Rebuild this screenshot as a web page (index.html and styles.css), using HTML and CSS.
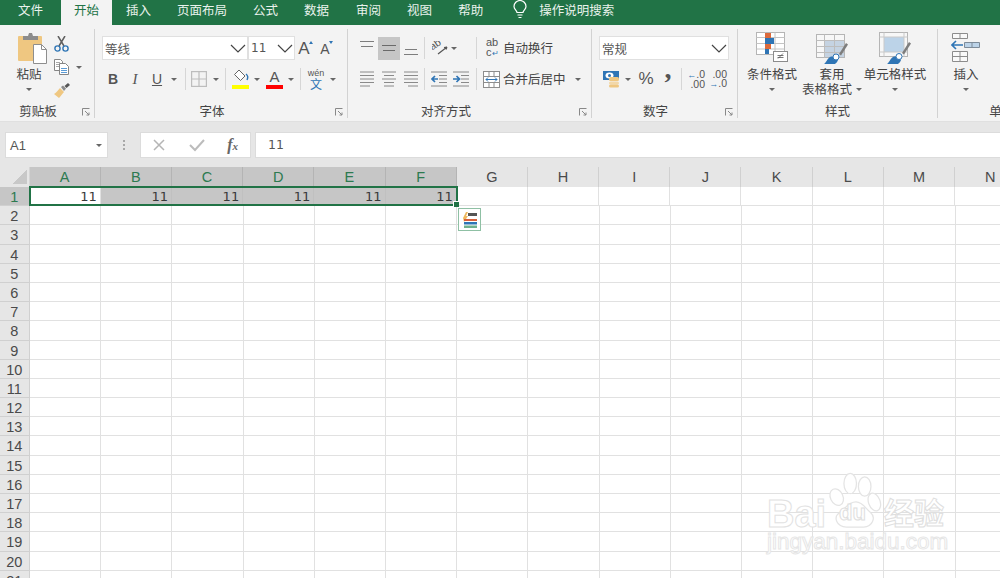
FILE: index.html
```html
<!DOCTYPE html>
<html lang="zh-CN">
<head>
<meta charset="utf-8">
<title>Excel</title>
<link rel="stylesheet" href="styles.css">
</head>
<body>
<div class="app">
  <nav class="tabs">
    <span class="tab">文件</span>
    <span class="tab active">开始</span>
    <span class="tab">插入</span>
    <span class="tab">页面布局</span>
    <span class="tab">公式</span>
    <span class="tab">数据</span>
    <span class="tab late">审阅</span>
    <span class="tab">视图</span>
    <span class="tab">帮助</span>
    <span class="search">
      <svg width="16" height="19" viewBox="0 0 16 19" fill="none" stroke="#fff" stroke-width="1.2"><path d="M5 12.5C5 10.500 2 9.500 2 6.500a6 6 0 0 1 12 0C14 9.500 11 10.500 11 12.500Z"/><path d="M5.500 15h5M6.500 17.500h3"/></svg>
      <span>操作说明搜索</span>
    </span>
  </nav>

  <section class="ribbon">
    <div class="group g-clip">
      <div class="gbody clip-body">
        <div class="big w42">
          <svg class="paste-i" width="30" height="33" viewBox="0 0 30 33"><rect x="1" y="4" width="24" height="25" rx="1" fill="#efc781"/><path d="M6 4h5l1-3h3l1 3h5v4H6Z" fill="#8c8c8c"/><path d="M16.500 12.500h8l5 5v14h-13Z" fill="#fff" stroke="#8e8e8e"/><path d="M24.500 12.500v5h5" fill="none" stroke="#8e8e8e"/></svg>
          <span class="big-t">粘贴</span>
          <span class="big-c"><i class="caret"></i></span>
        </div>
        <div class="clip-tools">
          <div class="tool-row">
            <svg width="15" height="16" viewBox="0 0 15 16" fill="none"><path d="M4 0l6 10M11 0L5 10" stroke="#5f5f5f" stroke-width="1.500"/><circle cx="3.500" cy="12.500" r="2.600" stroke="#2f75b5" stroke-width="1.400"/><circle cx="11.500" cy="12.500" r="2.600" stroke="#2f75b5" stroke-width="1.400"/></svg>
          </div>
          <div class="tool-row">
            <svg width="15" height="16" viewBox="0 0 15 16" fill="#fff" stroke="#858585"><path d="M.5.500h6l2 2v9h-8Z"/><path d="M2 3.500h4M2 5.500h4M2 7.500h4" stroke="#a8a8a8"/><path d="M5.500 4.500h6l3 3v8h-9Z"/><path d="M7 9.500h6M7 11.500h6M7 13.500h6" stroke="#5b9bd5"/></svg>
            <i class="caret cl"></i>
          </div>
          <div class="tool-row">
            <svg width="16" height="15" viewBox="0 0 16 15"><path d="M0 11c2-1 4-4 6-6l4 4c-2 2-4 5-5 6Z" fill="#efc781"/><path d="M7 4l2-1.500 3 3L10 8Z" fill="#8a8a8a"/><path d="M10.500 3L14 0l2 2-3.500 3Z" fill="#555"/></svg>
          </div>
        </div>
      </div>
      <div class="gfoot"><span class="glabel pr-clip">剪贴板</span><svg class="launch" width="8" height="8" viewBox="0 0 8 8" fill="none" stroke="#888"><path d="M.5 7.500v-7h7M3 3l4 4M7 4.500V7H4.500"/></svg></div>
    </div>

    <div class="group g-font">
      <div class="gbody pad8">
        <div class="line">
          <div class="select w145"><span>等线</span><svg width="16" height="9" viewBox="0 0 16 9" fill="none" stroke="#444" stroke-width="1.200"><path d="M1 1l7 7 7-7"/></svg></div>
          <div class="select w47"><span class="num">11</span><svg width="16" height="9" viewBox="0 0 16 9" fill="none" stroke="#444" stroke-width="1.200"><path d="M1 1l7 7 7-7"/></svg></div>
          <span class="growa"><span class="ga big-a">A</span><i class="tri-up"></i></span>
          <span class="growa"><span class="ga small-a">A</span><i class="tri-down"></i></span>
        </div>
        <div class="line second">
          <span class="fmt w22 b">B</span>
          <span class="fmt w22 it">I</span>
          <span class="fmt w22 un">U</span>
          <span class="cw12"><i class="caret"></i></span>
          <i class="sep m4"></i>
          <span class="cell-i">
            <svg width="16" height="16" viewBox="0 0 16 16" fill="none" stroke="#bdbdbd" stroke-width="1.200"><rect x=".6" y=".6" width="14.800" height="14.800"/><path d="M8 .6v14.800M.6 8h14.800"/></svg>
          </span>
          <span class="cw18"><i class="caret"></i></span>
          <i class="sep"></i>
          <span class="colorb ml7">
            <svg width="18" height="13" viewBox="0 0 18 13" fill="none"><path d="M7 1l6 6-4.500 4.500-6-6Z" fill="#fff" stroke="#666"/><path d="M14 5c2 1.500 2 4 1 6" stroke="#2f75b5" stroke-width="1.400"/></svg>
            <i class="bar yellow"></i>
          </span>
          <span class="cw12 ml2"><i class="caret"></i></span>
          <span class="colorb ml3">
            <span class="fa">A</span>
            <i class="bar red"></i>
          </span>
          <span class="cw12 ml2"><i class="caret"></i></span>
          <i class="sep m3"></i>
          <span class="wen"><span class="wen-top">wén</span><span class="wen-b">文</span></span>
          <span class="cw14"><i class="caret"></i></span>
        </div>
      </div>
      <div class="gfoot"><span class="glabel pr-font">字体</span><svg class="launch" width="8" height="8" viewBox="0 0 8 8" fill="none" stroke="#888"><path d="M.5 7.500v-7h7M3 3l4 4M7 4.500V7H4.500"/></svg></div>
    </div>

    <div class="group g-align">
      <div class="gbody align-body">
        <div class="line">
          <span class="al"><svg width="14" height="23" viewBox="0 0 14 23" stroke="#7d7d7d" stroke-width="1.200"><path d="M0 4.500h14M1 9.500h12"/></svg></span>
          <span class="al on"><svg width="14" height="23" viewBox="0 0 14 23" stroke="#6a6a6a" stroke-width="1.200"><path d="M0 8.500h14M1 13.500h12"/></svg></span>
          <span class="al"><svg width="14" height="23" viewBox="0 0 14 23" stroke="#7d7d7d" stroke-width="1.200"><path d="M1 12.500h12M0 17.500h14"/></svg></span>
          <i class="sep m-al"></i>
          <span class="orient"><svg width="16" height="14" viewBox="0 0 16 14"><text class="orient-t" x="0" y="9" transform="rotate(-35 1 9)">ab</text><path d="M6 13l9-7M15 6l-3 .5M15 6l-1 2.500" fill="none" stroke="#555" stroke-width="1.200"/></svg></span>
          <i class="caret cl2"></i>
          <i class="sep m-wrap"></i>
          <span class="wrap-i"><span class="wrap-ab">ab</span><span class="wrap-c">c<em>↵</em></span></span>
          <span class="atext">自动换行</span>
        </div>
        <div class="line second">
          <span class="al"><svg width="14" height="16" viewBox="0 0 14 16" stroke="#8a8a8a"><path d="M0 1h14M0 4.500h14M0 8h14M0 11.500h14M0 15h10"/></svg></span>
          <span class="al"><svg width="14" height="16" viewBox="0 0 14 16" stroke="#8a8a8a"><path d="M0 1h14M2 4.500h10M0 8h14M2 11.500h10M2 15h10"/></svg></span>
          <span class="al"><svg width="14" height="16" viewBox="0 0 14 16" stroke="#8a8a8a"><path d="M0 1h14M0 4.500h14M0 8h14M0 11.500h14M4 15h10"/></svg></span>
          <i class="sep m-al"></i>
          <span class="ind"><svg width="16" height="16" viewBox="0 0 16 16" fill="none"><path d="M0 1h16M8 4.500h8M8 8h8M8 11.500h8M0 15h16" stroke="#8a8a8a"/><path d="M1 8h6M4 5L1 8l3 3" stroke="#2f75b5" stroke-width="1.700"/></svg></span>
          <span class="ind"><svg width="16" height="16" viewBox="0 0 16 16" fill="none"><path d="M0 1h16M8 4.500h8M8 8h8M8 11.500h8M0 15h16" stroke="#8a8a8a"/><path d="M0 8h6M3.500 5l3 3-3 3" stroke="#2f75b5" stroke-width="1.700"/></svg></span>
          <i class="sep m-merge"></i>
          <svg class="merge-i" width="17" height="17" viewBox="0 0 17 17" fill="#fff" stroke="#8d8d8d"><rect x=".5" y=".5" width="16" height="16"/><path d="M.5 5.500h16M.5 11.500h16M6 .5v5M11 .5v5M6 11.500v5M11 11.500v5"/><path d="M3 8.500h11M5 6.500l-2 2 2 2M12 6.500l2 2-2 2" fill="none" stroke="#2f75b5"/></svg>
          <span class="atext">合并后居中</span>
          <i class="caret cl3"></i>
        </div>
      </div>
      <div class="gfoot"><span class="glabel pr-align">对齐方式</span><svg class="launch" width="8" height="8" viewBox="0 0 8 8" fill="none" stroke="#888"><path d="M.5 7.500v-7h7M3 3l4 4M7 4.500V7H4.500"/></svg></div>
    </div>

    <div class="group g-num">
      <div class="gbody pad8">
        <div class="line">
          <div class="select w129"><span>常规</span><svg width="16" height="9" viewBox="0 0 16 9" fill="none" stroke="#444" stroke-width="1.200"><path d="M1 1l7 7 7-7"/></svg></div>
        </div>
        <div class="line second">
          <svg class="money" width="18" height="17" viewBox="0 0 18 17"><rect x="0" y="0" width="16" height="9" fill="#2f75b5"/><ellipse cx="6.500" cy="4.500" rx="4" ry="3" fill="#fff"/><circle cx="6.500" cy="4.500" r="1.500" fill="#2f75b5"/><rect x="6" y="6" width="10" height="4" rx="1.500" fill="#efc781"/><rect x="6" y="10.500" width="10" height="3" rx="1.500" fill="#f3d8a8"/><rect x="6" y="13.500" width="10" height="3" rx="1.500" fill="#efc781"/></svg>
          <span class="cw-m"><i class="caret"></i></span>
          <span class="pct">%</span>
          <span class="comma">,</span>
          <i class="sep m-ns"></i>
          <span class="dec"><span><em>←</em>.0</span><span>.00</span></span>
          <span class="dec dec2"><span>.00</span><span><em>→</em>.0</span></span>
        </div>
      </div>
      <div class="gfoot"><span class="glabel pr-num">数字</span><svg class="launch" width="8" height="8" viewBox="0 0 8 8" fill="none" stroke="#888"><path d="M.5 7.500v-7h7M3 3l4 4M7 4.500V7H4.500"/></svg></div>
    </div>

    <div class="group g-style">
      <div class="gbody style-body">
        <div class="big w60">
          <svg width="33" height="33" viewBox="0 0 33 33"><g fill="#fff" stroke="#b5b5b5"><rect x=".5" y=".5" width="28" height="22"/></g><path d="M.5 5.500h28M.5 11.500h28M.5 17h28M9.500.5v22M19 .5v22" stroke="#c4c4c4" fill="none"/><rect x="9" y="1" width="6" height="5" fill="#dc6a3c"/><rect x="9" y="6" width="9" height="6" fill="#2f75b5"/><rect x="9" y="12" width="6" height="5" fill="#dc6a3c"/><rect x="9" y="17" width="4" height="5" fill="#2f75b5"/><rect x="17.500" y="19.500" width="14" height="10" fill="#fff" stroke="#8c8c8c"/><path d="M22 26.500l5-5M21.500 23.500h6M21.500 25.500h6" stroke="#555" stroke-width=".8"/></svg>
          <span class="big-t">条件格式</span>
          <span class="big-c"><i class="caret"></i></span>
        </div>
        <div class="big w60">
          <svg width="32" height="33" viewBox="0 0 32 33"><rect x=".5" y="2.500" width="28" height="23" fill="#f7f7f7" stroke="#b5b5b5"/><rect x="8" y="9" width="20" height="16" fill="#c5d3e2"/><path d="M.5 8.500h28M.5 14.500h28M.5 20.500h28M8.500 2.500v23M18.500 2.500v23" fill="none" stroke="#bdbdbd"/><path d="M23 22L30 11l2 1.500-7 11Z" fill="#7d7d7d"/><path d="M8 32c2-1 3-5 6-7 3-1.500 7 1 8 3-.5 2-2 3-3 4Z" fill="#2f75b5"/><circle cx="20" cy="25" r="3" fill="#fff" stroke="#2f75b5"/></svg>
          <span class="big-t">套用</span>
          <span class="big-t nowrap">表格格式<i class="caret cl4"></i></span>
        </div>
        <div class="big w66">
          <svg width="32" height="33" viewBox="0 0 32 33"><rect x=".5" y=".5" width="28" height="24" fill="#f7f7f7" stroke="#b5b5b5"/><rect x="5" y="5" width="20" height="15" fill="#bcd3e8"/><path d="M.5 5h28M.5 20h28M5 .5v24M25 .5v24" fill="none" stroke="#c9c9c9"/><path d="M23 21L30 10l2 1.500-7 11Z" fill="#7d7d7d"/><path d="M8 32c2-1 3-5 6-7 3-1.500 7 1 8 3-.5 2-2 3-3 4Z" fill="#2f75b5"/><circle cx="20" cy="24.500" r="3" fill="#fff" stroke="#2f75b5"/></svg>
          <span class="big-t">单元格样式</span>
          <span class="big-c"><i class="caret"></i></span>
        </div>
      </div>
      <div class="gfoot"><span class="glabel">样式</span></div>
    </div>

    <div class="group g-cells">
      <div class="gbody cells-body">
        <div class="big w56">
          <svg width="30" height="33" viewBox="0 0 30 33" fill="#f9f9f9" stroke="#8c8c8c"><path d="M1.500 1.500h15v5h-15ZM9 1.500v5M1.500 19.500h15v10h-15ZM1.500 24.500h15M9 19.500v10"/><path d="M13.500 10.500h15v5h-15ZM21 10.500v5" fill="#bcd3e8" stroke="#7d8b99"/><path d="M1 13h11M5 9l-4 4 4 4" fill="none" stroke="#2f75b5" stroke-width="1.600"/></svg>
          <span class="big-t">插入</span>
          <span class="big-c"><i class="caret"></i></span>
        </div>
        <div class="big w56 next">
          <svg width="30" height="33" viewBox="0 0 30 33" fill="#f9f9f9" stroke="#8c8c8c"><path d="M1.500 1.500h15v5h-15ZM1.500 19.500h15v10h-15Z"/></svg>
          <span class="big-t">删除</span>
          <span class="big-c"><i class="caret"></i></span>
        </div>
      </div>
      <div class="gfoot"><span class="glabel">单元格</span></div>
    </div>
  </section>

  <div class="fbar">
    <div class="namebox"><span>A1</span><i class="caret"></i></div>
    <div class="dots"><i></i><i></i><i></i></div>
    <div class="fbtns">
      <svg width="14" height="14" viewBox="0 0 14 14" stroke="#b5b5b5" stroke-width="1.500"><path d="M2 2l10 10M12 2L2 12"/></svg>
      <svg width="16" height="14" viewBox="0 0 16 14" fill="none" stroke="#bcbcbc" stroke-width="2"><path d="M1 7l5 5 9-10"/></svg>
      <span class="fx">f<span class="fx-x">x</span></span>
    </div>
    <div class="finput">11</div>
  </div>

  <main class="sheet">
    <div class="corner"><i></i></div>
    <div class="ch sel">A</div><div class="ch sel">B</div><div class="ch sel">C</div><div class="ch sel">D</div><div class="ch sel">E</div><div class="ch sel">F</div>
    <div class="ch">G</div><div class="ch">H</div><div class="ch">I</div><div class="ch">J</div><div class="ch">K</div><div class="ch">L</div><div class="ch">M</div><div class="ch">N</div>

    <div class="rh sel">1</div>
    <div class="c v">11</div><div class="c v s">11</div><div class="c v s">11</div><div class="c v s">11</div><div class="c v s">11</div><div class="c v s">11</div>
    <div class="c"></div><div class="c"></div><div class="c"></div><div class="c"></div><div class="c"></div><div class="c"></div><div class="c"></div><div class="c"></div>

    <div class="rh">2</div><div class="blank"></div>
    <div class="rh">3</div><div class="blank"></div>
    <div class="rh">4</div><div class="blank"></div>
    <div class="rh">5</div><div class="blank"></div>
    <div class="rh">6</div><div class="blank"></div>
    <div class="rh">7</div><div class="blank"></div>
    <div class="rh">8</div><div class="blank"></div>
    <div class="rh">9</div><div class="blank"></div>
    <div class="rh">10</div><div class="blank"></div>
    <div class="rh">11</div><div class="blank"></div>
    <div class="rh">12</div><div class="blank"></div>
    <div class="rh">13</div><div class="blank"></div>
    <div class="rh">14</div><div class="blank"></div>
    <div class="rh">15</div><div class="blank"></div>
    <div class="rh">16</div><div class="blank"></div>
    <div class="rh">17</div><div class="blank"></div>
    <div class="rh">18</div><div class="blank"></div>
    <div class="rh">19</div><div class="blank"></div>
    <div class="rh">20</div><div class="blank"></div>
    <div class="rh">21</div><div class="blank"></div>

    <div class="selection"><i class="handle"></i></div>
    <div class="paste-opt">
      <svg width="18" height="18" viewBox="0 0 18 18"><path d="M2 7l3-6h2L5 5h2L3 11Z" fill="#efb95e"/><rect x="7" y="2" width="9" height="3" fill="#555"/><rect x="3" y="8" width="13" height="2" fill="#d9603a"/><rect x="3" y="11" width="13" height="2.500" fill="#2f75b5"/><rect x="3" y="14.500" width="13" height="2.500" fill="#6fb18d"/></svg>
    </div>

    <div class="watermark">
      <div class="wm-top">
        <span class="wm-bai">Bai</span>
        <span class="wm-paw">
          <svg width="56" height="56" viewBox="0 0 56 58" fill="#fff" stroke="#e4e4e4" stroke-width="1.300"><ellipse cx="8" cy="26" rx="6.500" ry="9" transform="rotate(-25 8 26)"/><ellipse cx="22" cy="12" rx="6.500" ry="10.500"/><ellipse cx="37" cy="15" rx="6.500" ry="10"/><ellipse cx="47" cy="31" rx="6" ry="9.500" transform="rotate(-20 47 31)"/><path d="M28 31c7 0 10 7 15 11 6 5 2 15-7 15H18C8 57 4 47 11 42c6-4 9-11 17-11Z"/></svg>
          <span class="wm-du">du</span>
        </span>
        <span class="wm-jy">经验</span>
      </div>
      <div class="wm-url">jingyan.baidu.com</div>
    </div>
  </main>
</div>
</body>
</html>
```
FILE: styles.css
```css
* { box-sizing: border-box; }
html, body { margin: 0; height: 100%; overflow: hidden; background: #fff; }
body { font-family: "Noto Sans CJK SC", "Liberation Sans", sans-serif; color: #444; }
i, em { font-style: normal; }
.app { width: 1000px; height: 578px; overflow: hidden; display: flex; flex-direction: column; }

/* title tabs */
.tabs { height: 25px; flex: none; background: #217346; display: flex; align-items: stretch; padding-left: 5px; color: #e9f2ec; font-size: 12.5px; line-height: 20px; }
.tab { padding: 0 13px; }
.tab.active { background: #f3f3f3; color: #217346; margin: 0 1px 0 5px; }
.tab.late { margin-left: 1px; }
.search { display: flex; align-items: flex-start; gap: 11px; margin-left: 16px; }

/* ribbon */
.ribbon { height: 96px; flex: none; background: #f3f3f3; display: flex; overflow: hidden; }
.group { flex: none; margin: 4px 0 3px; border-right: 1px solid #d2d2d2; display: flex; flex-direction: column; }
.g-clip { width: 95px; }
.g-font { width: 253px; }
.g-align { width: 244px; }
.g-num { width: 146px; }
.g-style { width: 200px; }
.g-cells { width: 140px; border-right: 0; }
.gbody { height: 73px; flex: none; }
.gfoot { flex: 1; display: flex; align-items: center; font-size: 12.5px; padding-top: 1px; }
.glabel { flex: 1; text-align: center; line-height: 16px; }
.launch { flex: none; margin-right: 4px; margin-top: 2px; }
.pr-clip { padding-right: 6px; }
.pr-font { padding-right: 6px; }
.pr-align { padding-right: 35px; }
.pr-num { padding-right: 6px; }
.pad8 { padding: 7px 0 0 7px; }

.caret { display: inline-block; width: 0; height: 0; border: 3px solid transparent; border-top: 3.5px solid #666; border-bottom: 0; }
.line { display: flex; align-items: center; height: 24px; }
.second { margin-top: 7px; }
.sep { display: block; width: 1px; height: 22px; background: #d6d6d6; flex: none; }

/* clipboard */
.clip-body { display: flex; padding: 3px 0 0 8px; }
.big { flex: none; display: flex; flex-direction: column; align-items: center; font-size: 12.5px; line-height: 16px; }
.big svg { flex: none; display: block; height: 33px; }
.big-t { display: block; margin-top: 1px; white-space: nowrap; }
.big-t + .big-t { margin-top: -1px; }
.big-c { display: flex; align-items: center; justify-content: center; height: 15px; }
.paste-i { margin-left: 5px; }
.w42 { width: 42px; }
.w56 { width: 56px; }
.w60 { width: 60px; }
.w66 { width: 66px; }
.clip-tools { display: flex; flex-direction: column; padding-left: 4px; }
.tool-row { height: 23.5px; display: flex; align-items: center; gap: 7px; }
.cl { margin-top: 1px; }
.cl4 { margin-left: 4px; vertical-align: 3px; }

/* selects */
.select { height: 24px; background: #fff; border: 1px solid #e0e0e0; display: flex; align-items: center; justify-content: space-between; font-size: 12.5px; padding: 0 0 0 2px; color: #555; }
.select svg { margin-right: 1px; }
.num { font-family: "DejaVu Sans", sans-serif; font-size: 12px; }
.w145 { width: 146px; }
.w47 { width: 47px; }
.w129 { width: 130px; }
.growa { display: flex; align-items: flex-end; justify-content: center; width: 21px; height: 20px; }
.ga { font-family: "Liberation Sans", sans-serif; color: #555; line-height: 18px; }
.big-a { font-size: 17px; }
.small-a { font-size: 14px; }
.tri-up, .tri-down { display: block; width: 0; height: 0; border: 2.5px solid transparent; margin-bottom: 14px; margin-left: -1px; }
.tri-up { border-bottom: 3px solid #2f75b5; border-top: 0; }
.tri-down { border-top: 3px solid #2f75b5; border-bottom: 0; }

/* format row */
.fmt { display: flex; justify-content: center; font: 14px "Liberation Sans", sans-serif; color: #555; }
.w22 { width: 22px; }
.b { font-weight: bold; }
.it { font-style: italic; font-family: "Liberation Serif", serif; font-size: 15px; }
.un { text-decoration: underline; }
.cw12 { width: 12px; display: flex; justify-content: center; }
.cw14 { width: 14px; display: flex; justify-content: center; }
.cw18 { width: 18px; display: flex; justify-content: center; }
.m4 { margin: 0 5px; }
.m3 { margin: 0 5px 0 3px; }
.ml7 { margin-left: 6px; }
.ml2 { margin-left: 2px; }
.ml3 { margin-left: 3px; }
.cell-i { display: flex; }
.colorb { display: flex; flex-direction: column; align-items: center; width: 17px; height: 20px; }
.colorb svg { display: block; }
.bar { display: block; width: 17px; height: 4px; margin-top: auto; }
.yellow { background: #ffff00; }
.red { background: #ff0000; }
.fa { font: 15px/15px "Liberation Sans", sans-serif; color: #555; }
.wen { display: flex; flex-direction: column; align-items: center; width: 20px; }
.wen-top { font: 9px/9px "Liberation Sans", sans-serif; color: #555; }
.wen-b { font-size: 12px; line-height: 12px; color: #2f75b5; }

/* alignment */
.align-body { padding: 7px 0 0 8px; }
.al { width: 22px; height: 23px; display: flex; align-items: center; justify-content: center; flex: none; }
.al.on { background: #c6c6c6; }
.m-al { margin: 0 3px 0 2px; }
.orient { margin-left: 4px; width: 17px; display: flex; }
.orient-t { font: 10.5px "Liberation Sans", sans-serif; fill: #555; }
.cl2 { margin-left: 2px; }
.m-wrap { margin: 0 9px 0 19px; }
.wrap-i { display: flex; flex-direction: column; width: 13px; font: 11px/9.5px "Liberation Sans", sans-serif; color: #555; margin-right: 4px; }
.wrap-c em { color: #2f75b5; font-size: 8px; }
.atext { font-size: 12.5px; line-height: 16px; white-space: nowrap; }
.ind { width: 22px; display: flex; justify-content: center; flex: none; }
.m-merge { margin: 0 6px 0 4px; }
.merge-i { margin-right: 3px; flex: none; }
.cl3 { margin-left: 9px; }

/* number */
.money { margin-left: 4px; flex: none; }
.cw-m { width: 14px; display: flex; justify-content: center; }
.pct { font: 17px "Liberation Sans", sans-serif; color: #555; width: 16px; margin-left: 3px; text-align: center; }
.comma { font: bold 28px/16px "Liberation Serif", serif; color: #555; width: 14px; margin: 0 0 20px 7px; text-align: center; }
.m-ns { margin: 0 7px 0 6px; }
.dec { display: flex; flex-direction: column; align-items: flex-end; width: 16px; font: 10.5px/8.5px "Liberation Sans", sans-serif; color: #555; }
.dec em { color: #2f75b5; font-weight: bold; font-size: 9px; }
.dec2 { margin-left: 6px; }

/* styles and cells */
.style-body { padding: 3px 0 0 4px; display: flex; }
.nowrap { display: block; }
.cells-body { padding-top: 3px; display: flex; }

/* formula bar */
.fbar { height: 46px; flex: none; background: #e6e6e6; display: flex; align-items: flex-start; padding: 10px 0 0 5px; border-top: 1px solid #e0e0e0; }
.namebox { width: 103px; height: 26px; background: #fff; border: 1px solid #dcdcdc; display: flex; align-items: center; justify-content: space-between; padding: 0 5px 0 4px; font: 13px "Liberation Sans", sans-serif; color: #555; }
.dots { width: 32px; height: 26px; display: flex; flex-direction: column; align-items: center; justify-content: center; gap: 2px; }
.dots i { width: 2px; height: 2px; background: #a8a8a8; display: block; }
.fbtns { width: 111px; height: 26px; background: #fff; border: 1px solid #dcdcdc; display: flex; align-items: center; justify-content: space-between; padding: 0 11px 0 11px; }
.fx { font: italic bold 16px/18px "Liberation Serif", serif; color: #666; margin-right: 1px; }
.fx-x { font-size: 11px; }
.finput { flex: 1; margin-left: 4px; height: 26px; background: #fff; border: 1px solid #dcdcdc; border-right: 0; font: 12.5px/24px "DejaVu Sans", sans-serif; color: #555; padding-left: 12px; }

/* sheet */
.sheet { position: relative; flex: 1; min-height: 0; display: grid; grid-template-columns: 29.6px repeat(14, 71.2px); grid-template-rows: 20px 19.2px; grid-auto-rows: 19.2px; font: 14.5px "Liberation Sans", sans-serif; color: #444; background: #fff; }
.corner { background: #e6e6e6; border-right: 1px solid #d5d5d5; position: relative; }
.corner i { position: absolute; right: 2px; bottom: 3px; width: 14px; height: 14px; background: linear-gradient(135deg, transparent 50%, #c8c8c8 50%); }
.ch { background: #e6e6e6; border-right: 1px solid #d0d0d0; text-align: center; line-height: 21px; color: #4a4a4a; overflow: hidden; }
.ch.sel, .rh.sel { background: #c6c6c6; color: #2d7a50; }
.ch.sel { border-right-color: #b4b4b4; }
.rh { background: #e6e6e6; border-bottom: 1px solid #d0d0d0; border-right: 1px solid #d0d0d0; text-align: center; line-height: 20px; color: #4a4a4a; overflow: hidden; }
.c { border-right: 1px solid #e1e1e1; border-bottom: 1px solid #e1e1e1; }
.v { text-align: right; padding-right: 3px; font: 13px/20px "DejaVu Sans", sans-serif; color: #3a3a3a; }
.s { background: #c6c6c6; border-color: #c0c0c0; }
.blank { grid-column: 2 / -1; background: repeating-linear-gradient(to right, transparent 0, transparent 70.2px, #e1e1e1 70.2px, #e1e1e1 71.2px); border-bottom: 1px solid #e1e1e1; }
.selection { position: absolute; left: 29px; top: 18.5px; width: 428.5px; height: 20.5px; border: 2px solid #217346; pointer-events: none; }
.handle { position: absolute; right: -3px; bottom: -3px; width: 6px; height: 6px; background: #217346; border: 1px solid #fff; border-width: 1px 0 0 1px; }
.paste-opt { position: absolute; left: 458px; top: 41px; width: 23px; height: 23px; background: #fff; border: 1px solid #8fc0a4; display: flex; align-items: center; justify-content: center; }
.watermark { position: absolute; left: 767px; top: 293px; width: 190px; pointer-events: none; }
.wm-top { display: flex; align-items: flex-end; height: 68px; }
.wm-bai { font: bold 38px/42px "Liberation Sans", sans-serif; color: #fff; -webkit-text-stroke: 1px #e2e2e2; width: 61px; margin-bottom: -7px; }
.wm-paw { position: relative; display: block; width: 56px; height: 56px; }
.wm-paw svg { display: block; }
.wm-du { position: absolute; left: 11px; bottom: 3px; font: bold 22px/24px "Liberation Sans", sans-serif; color: #fff; -webkit-text-stroke: 1px #dedede; }
.wm-jy { font: bold 30px/42px "Noto Sans CJK SC", sans-serif; color: #fff; -webkit-text-stroke: 1px #dedede; white-space: nowrap; margin-bottom: -4px; }
.wm-url { font: 22.5px/28px "Liberation Sans", sans-serif; color: #fff; -webkit-text-stroke: 1px #e6e6e6; white-space: nowrap; }
```
